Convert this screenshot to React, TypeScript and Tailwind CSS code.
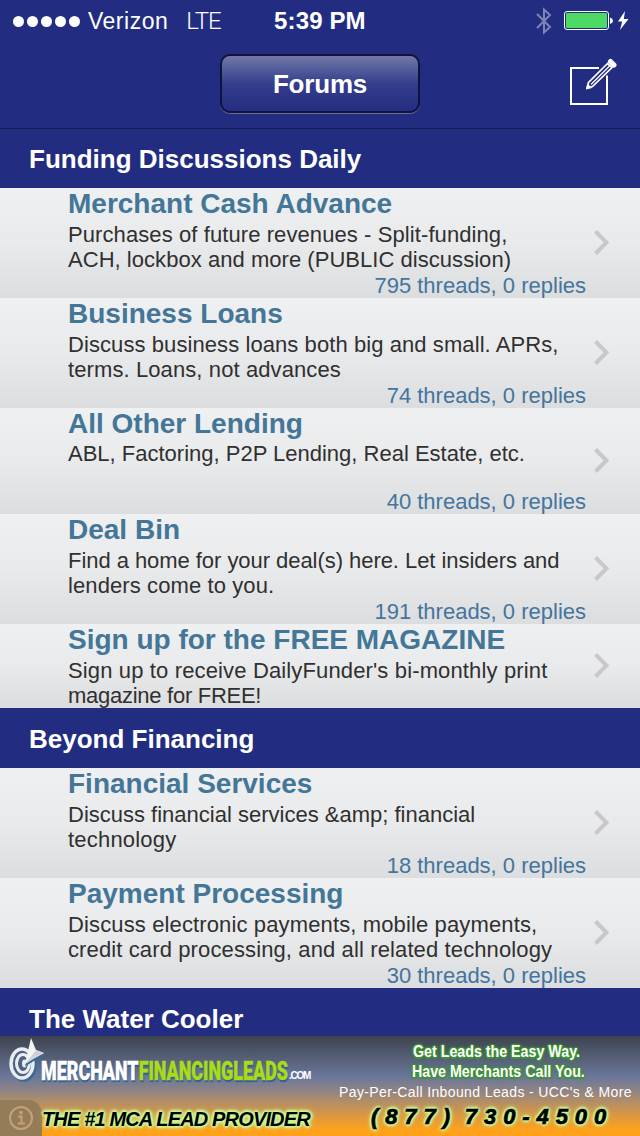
import { clsx } from 'clsx'

type Line = { text: string; tracking?: string }

type Forum = {
  title: string
  lines: Line[]
  count?: string
  height: string
}

const funding: Forum[] = [
  {
    title: 'Merchant Cash Advance',
    lines: [
      {
        text: 'Purchases of future revenues - Split-funding,',
        tracking: 'tracking-[0.09px]',
      },
      {
        text: 'ACH, lockbox and more (PUBLIC discussion)',
        tracking: 'tracking-[0.04px]',
      },
    ],
    count: '795 threads, 0 replies',
    height: 'h-[110px]',
  },
  {
    title: 'Business Loans',
    lines: [
      {
        text: 'Discuss business loans both big and small. APRs,',
        tracking: 'tracking-[0.08px]',
      },
      { text: 'terms. Loans, not advances', tracking: 'tracking-[0.1px]' },
    ],
    count: '74 threads, 0 replies',
    height: 'h-[110px]',
  },
  {
    title: 'All Other Lending',
    lines: [{ text: 'ABL, Factoring, P2P Lending, Real Estate, etc.' }],
    count: '40 threads, 0 replies',
    height: 'h-[106px]',
  },
  {
    title: 'Deal Bin',
    lines: [
      {
        text: 'Find a home for your deal(s) here. Let insiders and',
        tracking: 'tracking-[-0.05px]',
      },
      { text: 'lenders come to you.', tracking: 'tracking-[0.1px]' },
    ],
    count: '191 threads, 0 replies',
    height: 'h-[110px]',
  },
  {
    title: 'Sign up for the FREE MAGAZINE',
    lines: [
      {
        text: "Sign up to receive DailyFunder's bi-monthly print",
        tracking: 'tracking-[0.14px]',
      },
      { text: 'magazine for FREE!', tracking: 'tracking-[-0.27px]' },
    ],
    height: 'h-[84px]',
  },
]

const beyond: Forum[] = [
  {
    title: 'Financial Services',
    lines: [
      { text: 'Discuss financial services &amp; financial' },
      { text: 'technology', tracking: 'tracking-[0.2px]' },
    ],
    count: '18 threads, 0 replies',
    height: 'h-[110px]',
  },
  {
    title: 'Payment Processing',
    lines: [
      {
        text: 'Discuss electronic payments, mobile payments,',
        tracking: 'tracking-[0.13px]',
      },
      {
        text: 'credit card processing, and all related technology',
        tracking: 'tracking-[0.12px]',
      },
    ],
    count: '30 threads, 0 replies',
    height: 'h-[110px]',
  },
]

function StatusBar() {
  return (
    <div className="grid h-10 grid-cols-[261px_1fr_auto] items-start pl-[13px] pr-[11px] text-white">
      <div className="flex items-center pt-px">
        <div className="flex gap-[3px]">
          {[0, 1, 2, 3, 4].map((dot) => (
            <span key={dot} className="size-[11px] rounded-full bg-white" />
          ))}
        </div>
        <span className="ml-[8px] text-[23px] leading-10 tracking-[0.5px]">
          Verizon
        </span>
        <span className="ml-[18px] font-[Roboto] text-[24px] font-light leading-10 tracking-[-1px]">
          LTE
        </span>
      </div>
      <span className="pt-px text-[24px] font-bold leading-10 tracking-[0.15px]">
        5:39 PM
      </span>
      <div className="flex items-center pt-[7px]">
        <svg width="16" height="28" viewBox="0 0 16 28" fill="none" stroke="#7e84b5" strokeWidth="2">
          <path d="M1 7l13 13-6 5.500V2.500L14 8 1 21" />
        </svg>
        <svg className="ml-[12px]" width="50" height="20" viewBox="0 0 50 20">
          <rect x="0.500" y="0.500" width="44" height="18" rx="2.500" fill="none" stroke="white" />
          <rect x="2" y="2" width="41" height="15" rx="1" fill="#4cd964" />
          <path d="M46 6.500q3 1 3 3.300t-3 3.300z" fill="white" />
        </svg>
        <svg className="ml-[3px]" width="12" height="20" viewBox="0 0 12 20" fill="white">
          <path d="M8 0L1 10.500h4.200L3 19l8.500-11H6.800z" />
        </svg>
      </div>
    </div>
  )
}

function NavBar() {
  return (
    <div className="grid h-[89px] grid-cols-[1fr_200px_1fr] items-start border-b border-[#171c54] pt-[14px]">
      <span />
      <button
        type="button"
        className="h-[59px] w-[200px] rounded-[10px] border-2 border-[#10133b] bg-linear-to-b from-[#7378a8] via-[#353e8c] to-[#242d80] pt-[2px] text-[26px] font-bold tracking-[-0.2px] text-white shadow-[0_1px_0_#686c92]"
      >
        Forums
      </button>
      <svg
        className="mr-[23px] mt-[4px] justify-self-end"
        width="48"
        height="48"
        viewBox="0 0 48 48"
        fill="none"
        stroke="white"
        strokeWidth="2"
      >
        <path d="M30 10H2v36h36V17.500" />
        <path d="M38.500 5.500L19.500 24.500 18 30l5.500-1.500L43 9.500z" strokeWidth="1.700" />
        <path d="M40.500 8L22 26.500" strokeWidth="1.200" />
        <path d="M17 31.500l1.500-6 4.500 4.500z" fill="white" stroke="none" />
        <path d="M41.500 3.500l3.500 3.500" strokeWidth="5" strokeLinecap="round" />
      </svg>
    </div>
  )
}

function SectionHeader({ title }: { title: string }) {
  return (
    <h2 className="flex h-[60px] shrink-0 items-center bg-[#222d81] pl-[29px] pt-[2px] text-[26px] font-bold text-white">
      {title}
    </h2>
  )
}

function ForumRow({ title, lines, count, height }: Forum) {
  return (
    <div
      className={clsx(
        'flex shrink-0 items-center bg-linear-to-b from-[#eff0f1] via-[#e9eaeb] to-[#dcddde] pl-[68px] pr-[30px]',
        height
      )}
    >
      <div className="flex h-full w-[518px] flex-col whitespace-nowrap">
        <h3
          className={clsx(
            'shrink-0 text-[28px] font-bold leading-8 text-[#437697]',
            lines.length > 1 ? 'h-[34px]' : 'h-[33px]'
          )}
        >
          {title}
        </h3>
        {lines.map(({ text, tracking }) => (
          <p
            key={text}
            className={clsx('text-[22px] leading-[25px] text-[#303030]', tracking)}
          >
            {text}
          </p>
        ))}
        {count && (
          <p className="mt-auto text-right text-[22px] leading-[25px] text-[#43759e]">
            {count}
          </p>
        )}
      </div>
      <svg className="ml-auto" width="17" height="26" viewBox="0 0 17 26" fill="none" stroke="#c7c7cc" strokeWidth="4">
        <path d="M2.500 1.500L13.500 12.500l-11 11" />
      </svg>
    </div>
  )
}

function TargetLogo() {
  return (
    <svg className="shrink-0" width="38" height="46" viewBox="0 0 38 46" fill="none">
      <ellipse cx="15.500" cy="27" rx="11.500" ry="15" stroke="#376a98" strokeWidth="3.500" />
      <ellipse cx="14" cy="25.500" rx="11" ry="14.500" fill="#4f6285" stroke="#e9edf0" strokeWidth="3.500" />
      <ellipse cx="15" cy="25.500" rx="6.500" ry="9" stroke="#e9edf0" strokeWidth="3" />
      <ellipse cx="16.500" cy="25.500" rx="2.500" ry="4" fill="#e9edf0" />
      <path d="M17 27L23 1l5 11 9 4-12 6z" fill="#376a98" transform="translate(0 1.500)" />
      <path d="M17 26L23 0l5 12 8 3-11 6z" fill="#f3f4f5" />
      <path d="M17 26l11-14 8 3-11 6z" fill="#cfd3d6" />
    </svg>
  )
}

const limeGlow =
  '[text-shadow:2px_0_2px_#caf794,-2px_0_2px_#caf794,0_2px_2px_#caf794,0_-2px_2px_#caf794,0_0_4px_#caf794,0_0_6px_#caf794]'
const greenGlow =
  '[text-shadow:1.500px_0_1px_#3f9433,-1.500px_0_1px_#3f9433,0_1.500px_1px_#3f9433,0_-1.500px_1px_#3f9433,0_0_3px_#3f9433,0_0_4px_#3f9433]'

function AdBanner() {
  return (
    <div className="grid h-[100px] shrink-0 grid-cols-[336px_1fr] bg-[linear-gradient(#3e434f,#525a6f_18%,#69769a_40%,#8d8387_54%,#b38e66_66%,#e2993a_82%,#ffa21a_95%)] whitespace-nowrap">
      <div className="flex flex-col">
        <div className="flex h-[64px] items-start pl-[8px] pt-[2px]">
          <TargetLogo />
          <div className="-ml-[5px] mt-[18px] w-[249px] shrink-0 font-[Roboto] leading-8 [text-shadow:1px_2px_1px_#2c5f8c] [-webkit-text-stroke:0.4px]">
            <div className="w-max origin-left scale-x-[0.716] text-[25px] font-black text-white">
              MERCHANT<span className="text-[#a9dc16]">FINANCINGLEADS</span>
            </div>
          </div>
          <span className="mt-[30px] -ml-px text-[10px] font-bold leading-4 tracking-[-1.3px] text-white">
            .COM
          </span>
        </div>
        <div className="flex h-9 items-center">
          <span className="flex h-9 w-[42px] items-center justify-center rounded-tr-[14px] bg-[#947c59]">
            <svg width="26" height="26" viewBox="0 0 26 26" fill="none" stroke="#c5a176" strokeWidth="2">
              <circle cx="13" cy="13" r="11" />
              <path d="M10 11.500h3.500V18M10 18.500h7" />
              <path d="M13 6v3.200" strokeWidth="3" />
            </svg>
          </span>
          <span
            className={clsx(
              'pt-[2px] text-[20px] font-bold italic tracking-[-0.85px] text-black',
              limeGlow
            )}
          >
            THE #1 MCA LEAD PROVIDER
          </span>
        </div>
      </div>
      <div className="flex flex-col items-start pt-[6px] text-white">
        <p
          className={clsx(
            'ml-[77px] origin-left scale-x-[0.89] text-[16px] font-bold leading-5',
            greenGlow
          )}
        >
          Get Leads the Easy Way.
        </p>
        <p
          className={clsx(
            'ml-[76px] origin-left scale-x-[0.89] text-[16px] font-bold leading-5',
            greenGlow
          )}
        >
          Have Merchants Call You.
        </p>
        <p className="ml-[3px] text-[14px] leading-[21px] tracking-[0.38px]">
          Pay-Per-Call Inbound Leads - UCC's &amp; More
        </p>
        <p
          className={clsx(
            'ml-[35px] text-[22px] font-bold italic leading-[28px] tracking-[6.9px] text-black [-webkit-text-stroke:0.7px_black] [word-spacing:-5px]',
            limeGlow
          )}
        >
          (877) 730-4500
        </p>
      </div>
    </div>
  )
}

export default function App() {
  return (
    <div className="flex h-[1136px] w-[640px] flex-col overflow-hidden bg-[#222d81] font-['Liberation_Sans',Arial,sans-serif]">
      <header className="h-[129px] shrink-0">
        <StatusBar />
        <NavBar />
      </header>
      <main className="flex h-[907px] shrink-0 flex-col overflow-hidden">
        <div className="-mt-px">
          <SectionHeader title="Funding Discussions Daily" />
        </div>
        {funding.map((forum) => (
          <ForumRow key={forum.title} {...forum} />
        ))}
        <SectionHeader title="Beyond Financing" />
        {beyond.map((forum) => (
          <ForumRow key={forum.title} {...forum} />
        ))}
        <SectionHeader title="The Water Cooler" />
      </main>
      <AdBanner />
    </div>
  )
}
